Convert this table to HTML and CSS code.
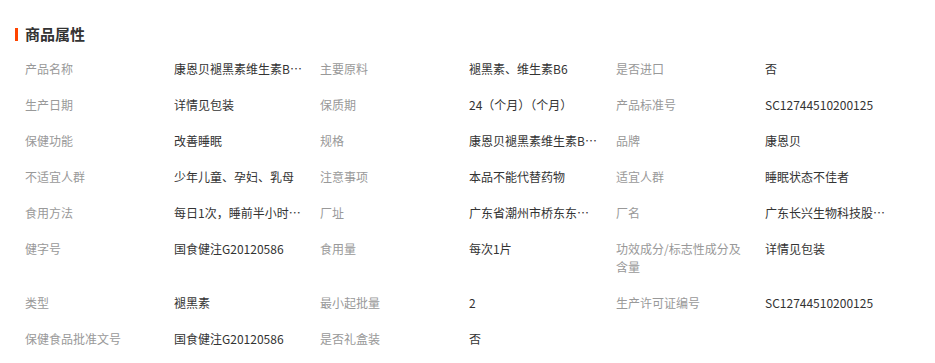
FILE: index.html
```html
<!DOCTYPE html>
<html lang="zh-CN">
<head>
<meta charset="utf-8">
<title>商品属性</title>
<link rel="stylesheet" href="styles.css">
</head>
<body>
<div class="attrs">
  <h3 class="attrs-title">商品属性</h3>
  <div class="attrs-grid">
    <div class="label">产品名称</div><div class="value" title="康恩贝褪黑素维生素B6片">康恩贝褪黑素维生素B6片</div>
    <div class="label">主要原料</div><div class="value">褪黑素、维生素B6</div>
    <div class="label">是否进口</div><div class="value">否</div>

    <div class="label">生产日期</div><div class="value">详情见包装</div>
    <div class="label">保质期</div><div class="value">24（个月）（个月）</div>
    <div class="label">产品标准号</div><div class="value">SC12744510200125</div>

    <div class="label">保健功能</div><div class="value">改善睡眠</div>
    <div class="label">规格</div><div class="value" title="康恩贝褪黑素维生素B6片">康恩贝褪黑素维生素B6片</div>
    <div class="label">品牌</div><div class="value">康恩贝</div>

    <div class="label">不适宜人群</div><div class="value">少年儿童、孕妇、乳母</div>
    <div class="label">注意事项</div><div class="value">本品不能代替药物</div>
    <div class="label">适宜人群</div><div class="value">睡眠状态不佳者</div>

    <div class="label">食用方法</div><div class="value" title="每日1次，睡前半小时服用">每日1次，睡前半小时服用</div>
    <div class="label">厂址</div><div class="value" title="广东省潮州市桥东东山路">广东省潮州市桥东东山路</div>
    <div class="label">厂名</div><div class="value" title="广东长兴生物科技股份有限公司">广东长兴生物科技股份有限公司</div>

    <div class="label">健字号</div><div class="value">国食健注G20120586</div>
    <div class="label">食用量</div><div class="value">每次1片</div>
    <div class="label">功效成分/标志性成分及含量</div><div class="value">详情见包装</div>

    <div class="label">类型</div><div class="value">褪黑素</div>
    <div class="label">最小起批量</div><div class="value">2</div>
    <div class="label">生产许可证编号</div><div class="value">SC12744510200125</div>

    <div class="label">保健食品批准文号</div><div class="value">国食健注G20120586</div>
    <div class="label">是否礼盒装</div><div class="value">否</div>
  </div>
</div>
</body>
</html>
```
FILE: styles.css
```css
html, body {
  margin: 0;
  padding: 0;
  background: #fff;
}
body {
  font-family: "Noto Sans CJK SC", "Noto Sans", "Liberation Sans", sans-serif;
  font-size: 12px;
  color: #333;
}
.attrs {
  padding: 24px 15px 0 15px;
}
.attrs-title {
  margin: 0;
  font-size: 15px;
  font-weight: bold;
  line-height: 20px;
  height: 20px;
  color: #333;
  display: flex;
  align-items: center;
}
.attrs-title::before {
  content: "";
  display: block;
  width: 3px;
  height: 13px;
  background: #ff4400;
  margin-right: 7px;
}
.attrs-grid {
  margin-top: 7px;
  margin-left: 10px;
  display: grid;
  grid-template-columns: 149px 146px 149px 147px 149px 146px;
}
.label, .value {
  padding: 9px 0;
  line-height: 18px;
}
.label {
  color: #999;
  width: 130px;
}
.value {
  color: #333;
  width: 128px;
  white-space: nowrap;
  overflow: hidden;
  text-overflow: ellipsis;
}
```
